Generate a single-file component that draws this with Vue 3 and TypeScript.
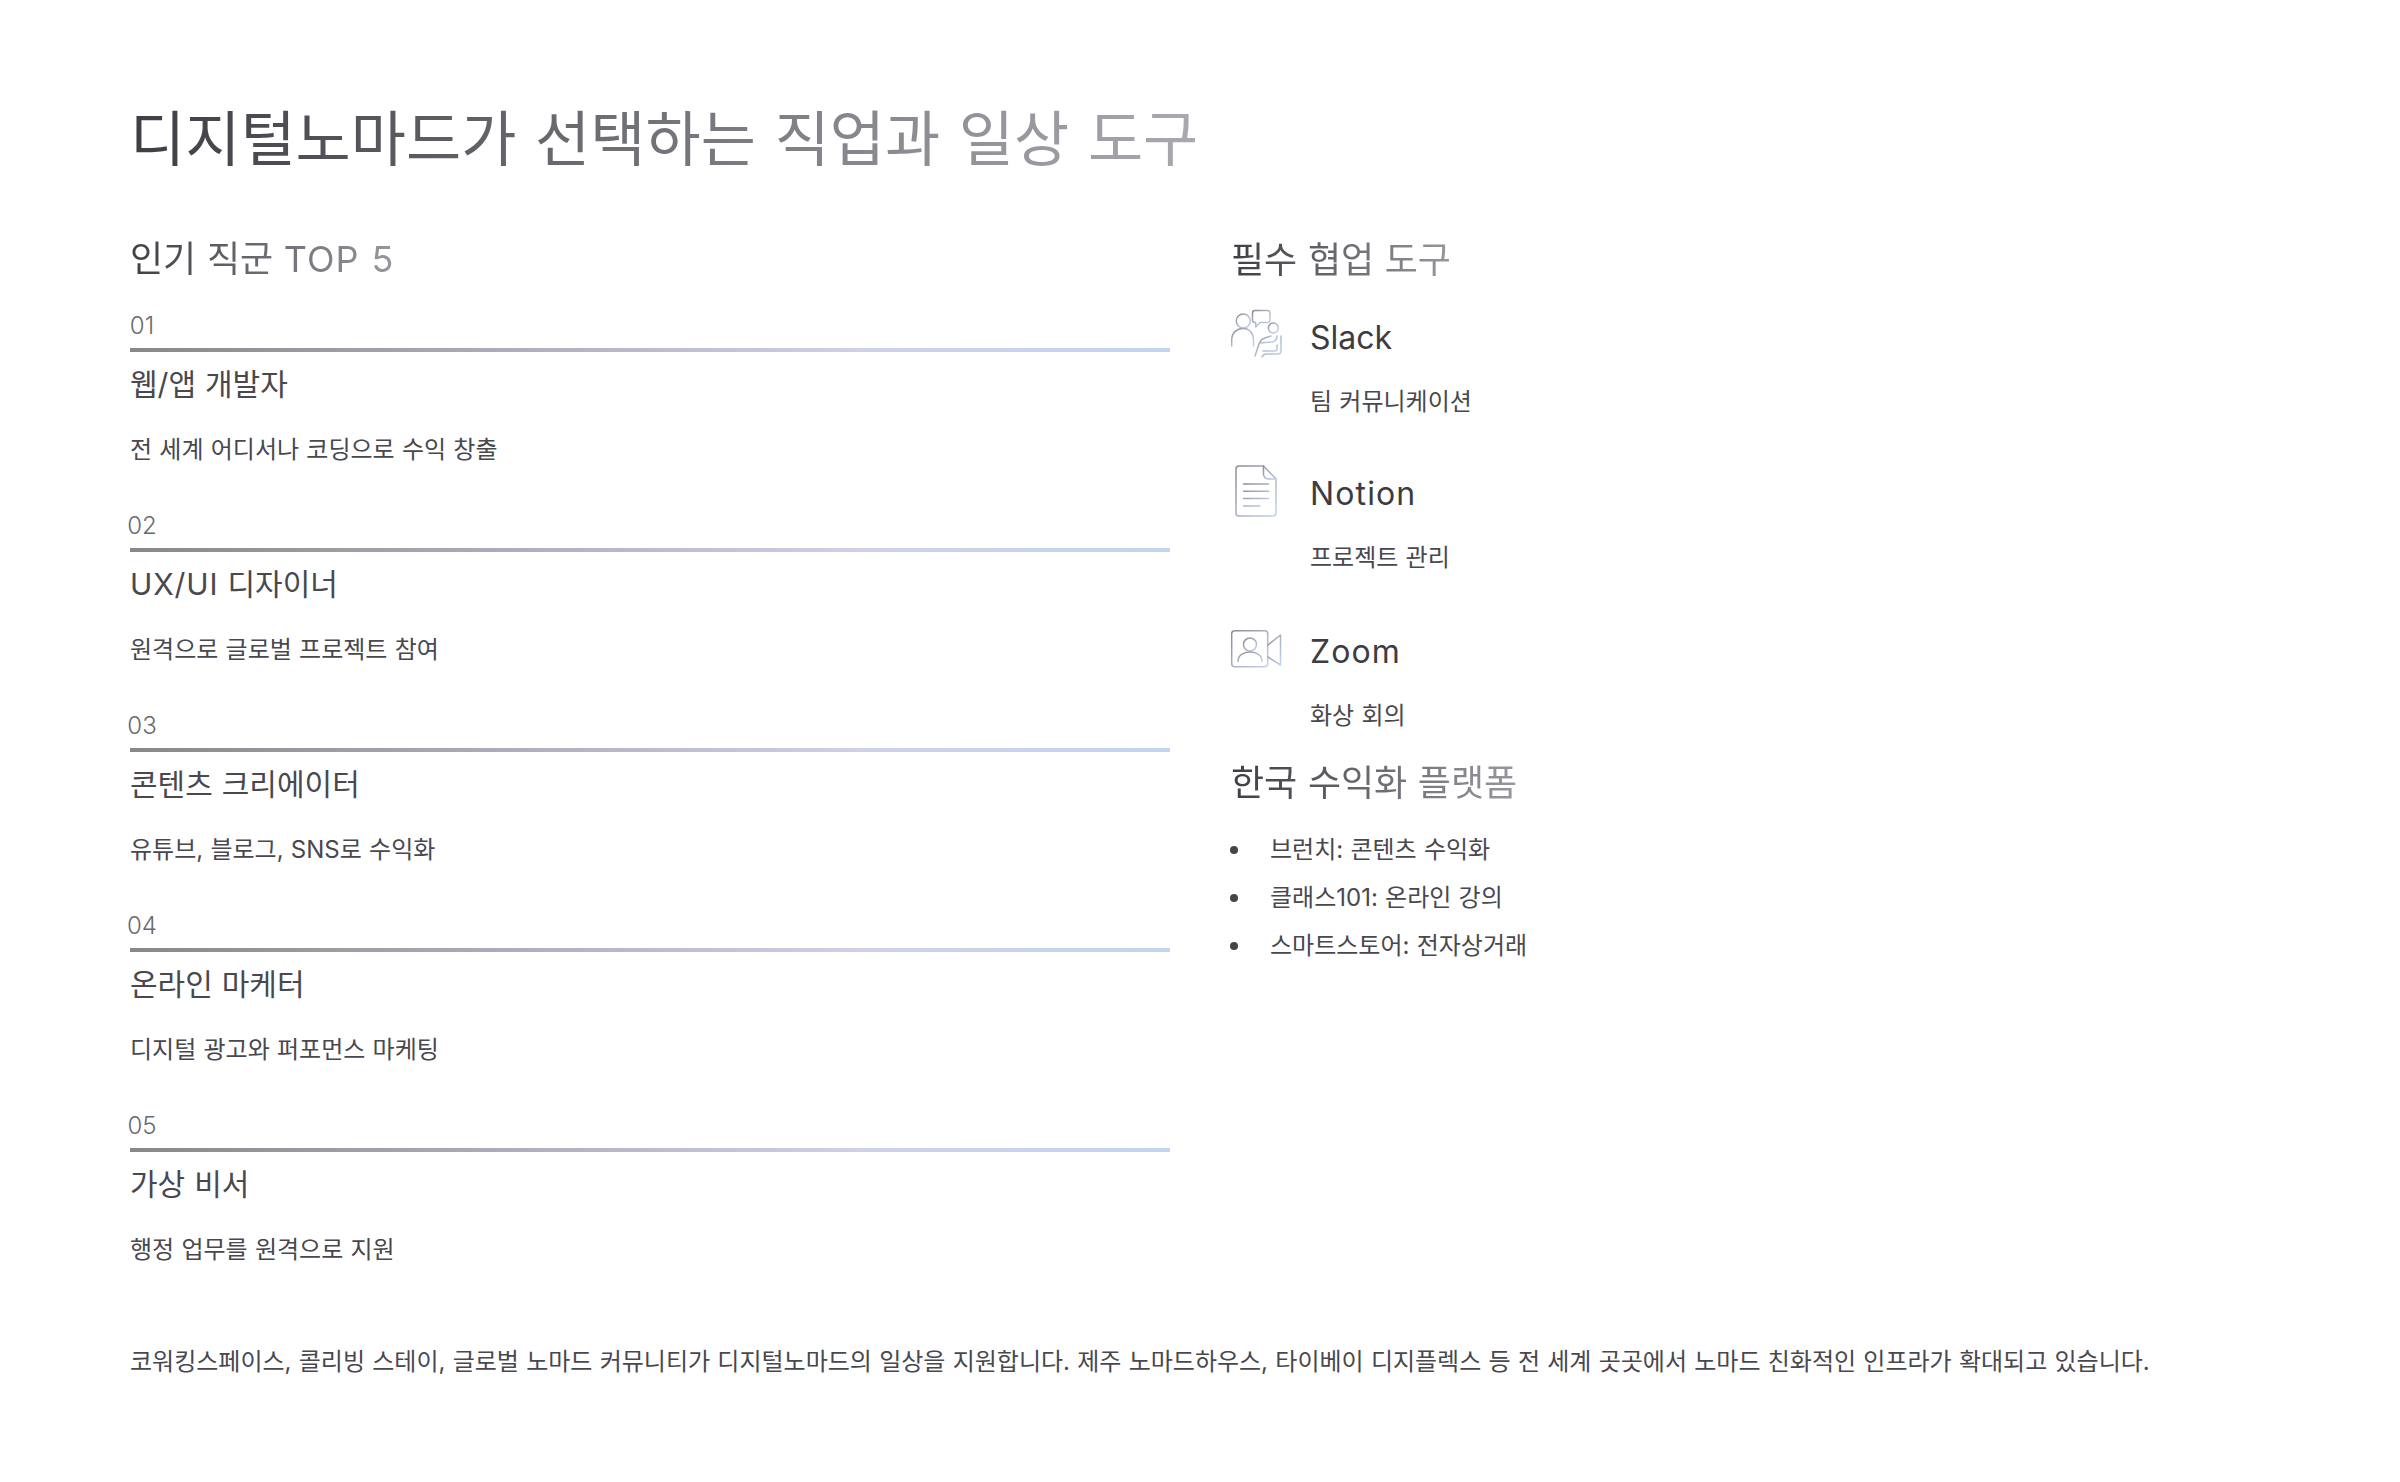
<script setup lang="ts">
interface Job { num: string; latin?: string; title: string; desc: string }
const jobs: Job[] = [
  { num: '01', title: '웹/앱 개발자', desc: '전 세계 어디서나 코딩으로 수익 창출' },
  { num: '02', latin: 'UX/UI', title: ' 디자이너', desc: '원격으로 글로벌 프로젝트 참여' },
  { num: '03', title: '콘텐츠 크리에이터', desc: '유튜브, 블로그, SNS로 수익화' },
  { num: '04', title: '온라인 마케터', desc: '디지털 광고와 퍼포먼스 마케팅' },
  { num: '05', title: '가상 비서', desc: '행정 업무를 원격으로 지원' }
]
const platforms: string[] = ['브런치: 콘텐츠 수익화', '클래스101: 온라인 강의', '스마트스토어: 전자상거래']
</script>

<template>
  <main class="page">
    <h1 class="title"><span class="grad">디지털노마드가 선택하는 직업과 일상 도구</span></h1>
    <div class="columns">
      <section class="left">
        <h2 class="heading"><span class="grad">인기 직군 <span class="latin">TOP 5</span></span></h2>
        <article v-for="job in jobs" :key="job.num" class="job">
          <div class="num"><span>{{ job.num }}</span></div>
          <div class="rule"></div>
          <h3 class="job-title"><span v-if="job.latin" class="latin">{{ job.latin }}</span>{{ job.title }}</h3>
          <p class="job-desc">{{ job.desc }}</p>
        </article>
      </section>
      <section class="right">
        <h2 class="heading"><span class="grad">필수 협업 도구</span></h2>
        <div class="tool">
          <div class="tool-row">
            <svg class="icon" viewBox="0 0 56 56" fill="none" stroke="url(#g1)" stroke-width="1.5" stroke-linecap="round" stroke-linejoin="round">
              <defs><linearGradient id="g1" x1="0" y1="0" x2="1" y2="1"><stop offset="0" stop-color="#8a8c92"/><stop offset="0.5" stop-color="#b4bccc"/><stop offset="1" stop-color="#c0cff0"/></linearGradient></defs>
              <circle cx="13.3" cy="13" r="7"/>
              <path d="M1.700 38v-6c0-7 5-11.500 11.300-11.500S23.500 25 23.500 32v6"/>
              <path d="M25 2.500h12.500a2.500 2.500 0 0 1 2.500 2.500v7a2.500 2.500 0 0 1-2.500 2.500H30l-4.300 4.500v-4.500H25a2.500 2.500 0 0 1-2.500-2.500V5A2.500 2.500 0 0 1 25 2.500z"/>
              <circle cx="43.300" cy="20" r="5"/>
              <path d="M25 48l4-12c1-3 3-5 6-6l6-2"/>
              <path d="M30 35l12-1c3-.5 5-3 5-6"/>
              <path d="M51 28v15c0 2-1 3-3 3H36c-2 0-3 1-4 3"/>
              <path d="M47 37v4c0 1-1 2-2 2H33"/>
            </svg>
            <span class="tool-name tight">Slack</span>
          </div>
          <p class="tool-desc">팀 커뮤니케이션</p>
        </div>
        <div class="tool">
          <div class="tool-row">
            <svg class="icon" viewBox="0 0 56 56" fill="none" stroke="url(#g2)" stroke-width="1.5" stroke-linecap="round" stroke-linejoin="round">
              <defs><linearGradient id="g2" x1="0" y1="0" x2="1" y2="1"><stop offset="0" stop-color="#8a8c92"/><stop offset="0.5" stop-color="#aab0c0"/><stop offset="1" stop-color="#c0d2f2"/></linearGradient></defs>
              <path d="M9 2h24.500l12.500 13v34a3 3 0 0 1-3 3H9a3 3 0 0 1-3-3V5a3 3 0 0 1 3-3z"/>
              <path d="M33.500 2v8a5 5 0 0 0 5 5H46"/>
              <path d="M13.500 20h25M13.500 27.300h25M13.500 34.500h25M13.500 42H30"/>
            </svg>
            <span class="tool-name">Notion</span>
          </div>
          <p class="tool-desc">프로젝트 관리</p>
        </div>
        <div class="tool last">
          <div class="tool-row">
            <svg class="icon" viewBox="0 0 56 56" fill="none" stroke="url(#g3)" stroke-width="1.5" stroke-linecap="round" stroke-linejoin="round">
              <defs><linearGradient id="g3" x1="0" y1="0" x2="1" y2="1"><stop offset="0" stop-color="#8a8c92"/><stop offset="0.5" stop-color="#aab0c0"/><stop offset="1" stop-color="#c0d2f2"/></linearGradient></defs>
              <rect x="1.700" y="8.700" width="36" height="36" rx="3"/>
              <circle cx="20" cy="22.500" r="6.500"/>
              <path d="M8 39.500c0-6 5-9.500 12-9.500s12 3.500 12 9.500"/>
              <path d="M38 23l12.500-10v30L38 35"/>
            </svg>
            <span class="tool-name">Zoom</span>
          </div>
          <p class="tool-desc">화상 회의</p>
        </div>
        <h2 class="heading second"><span class="grad">한국 수익화 플랫폼</span></h2>
        <ul class="list">
          <li v-for="p in platforms" :key="p"><i class="dot"></i><span>{{ p }}</span></li>
        </ul>
      </section>
    </div>
    <p class="footer">코워킹스페이스, 콜리빙 스테이, 글로벌 노마드 커뮤니티가 디지털노마드의 일상을 지원합니다. 제주 노마드하우스, 타이베이 디지플렉스 등 전 세계 곳곳에서 노마드 친화적인 인프라가 확대되고 있습니다.</p>
  </main>
</template>

<style scoped>
.page {
  width: 2400px;
  height: 1482px;
  box-sizing: border-box;
  padding: 99px 130px 0;
  background: #fff;
  font-family: "Inter", "Noto Sans CJK KR", sans-serif;
  font-weight: 400;
  word-spacing: 0.032em;
  color: #48484e;
  overflow: hidden;
}
.title {
  margin: 0;
  font-size: 60px;
  line-height: 80px;
  font-weight: 400;
  word-spacing: 0.03em;
}
.grad {
  display: inline-block;
  background: linear-gradient(90deg, #3e3e44 0%, #a8aab0 100%);
  -webkit-background-clip: text;
  background-clip: text;
  color: transparent;
}
.latin { letter-spacing: 0.03em; }
.columns {
  display: grid;
  grid-template-columns: 1040px 1040px;
  column-gap: 60px;
  margin-top: 56px;
}
.heading {
  margin: 0;
  font-size: 36px;
  line-height: 48px;
  font-weight: 400;
}
.heading .grad { background-image: linear-gradient(90deg, #3e3e44 0%, #96989e 100%); }
.right .heading { line-height: 50px; padding-left: 1px; }
.job { margin-top: 27px; }
.job + .job { margin-top: 42px; }
.num {
  display: flex;
  justify-content: center;
  width: 24px;
  font-size: 24px;
  line-height: 32px;
  color: #6a6a70;
  font-weight: 300;
  white-space: nowrap;
}
.rule {
  height: 4px;
  margin-top: 6px;
  background: linear-gradient(90deg, #888888 0%, #cfd0e8 70%, #c2d4f0 100%);
}
.job-title {
  margin: 12px 0 0;
  font-size: 30px;
  line-height: 40px;
  font-weight: 400;
}
.job-desc {
  margin: 28px 0 0;
  font-size: 24px;
  line-height: 36px;
}
.tool { margin-top: 23px; }
.tool + .tool { margin-top: 44px; }
.tool + .tool.last { margin-top: 46px; }
.tool-row {
  display: flex;
  align-items: center;
  gap: 24px;
  height: 56px;
}
.icon { width: 56px; height: 56px; flex: none; }
.tool-name {
  padding-top: 3px;
  font-size: 32px;
  line-height: 44px;
  letter-spacing: 0.035em;
  color: #3c3c42;
}
.tool-name.tight { letter-spacing: 0; }
.tool-desc {
  margin: 20px 0 0 80px;
  font-size: 24px;
  line-height: 36px;
}
.second { margin-top: 24px; }
.list {
  margin: 18px 0 0;
  padding: 0;
  list-style: none;
}
.list li {
  display: flex;
  align-items: center;
  gap: 32px;
  font-size: 24px;
  line-height: 48px;
}
.dot {
  width: 8px;
  height: 8px;
  flex: none;
  border-radius: 50%;
  background: #44444a;
}
.footer {
  margin: 76px 0 0;
  font-size: 24px;
  line-height: 36px;
}
</style>
